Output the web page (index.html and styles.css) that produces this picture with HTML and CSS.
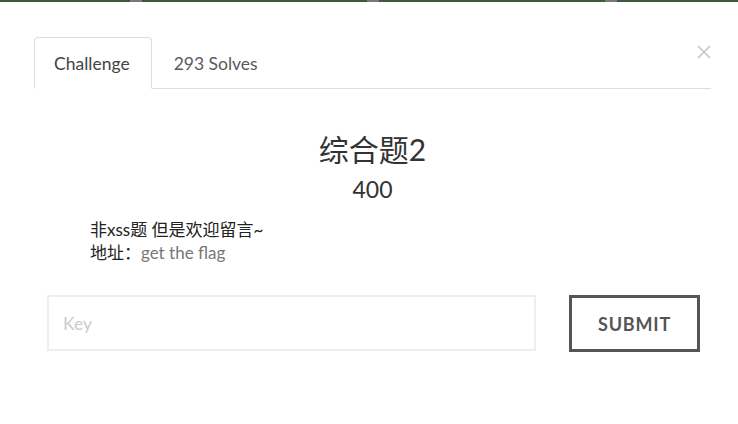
FILE: index.html
```html
<!DOCTYPE html>
<html lang="zh">
<head>
  <meta charset="UTF-8" />
  <meta name="viewport" content="width=device-width, initial-scale=1.0"/>
  <title>综合题2</title>
  <link rel="stylesheet" href="styles.css">
</head>
<body>

  <!-- strip of the page behind the modal -->
  <div class="top-strip">
    <span class="strip-mark mark-1"></span>
    <span class="strip-mark mark-2"></span>
    <span class="strip-mark mark-3"></span>
  </div>

  <div class="modal">
    <button class="close-btn" aria-label="Close">
      <svg width="14" height="14" viewBox="0 0 14 14">
        <path d="M1 1 L13 13 M13 1 L1 13" stroke="#c4c4c4" stroke-width="1.6" fill="none"/>
      </svg>
    </button>

    <!-- Tabs -->
    <ul class="nav-tabs">
      <li class="tab active">Challenge</li>
      <li class="tab">293 Solves</li>
    </ul>

    <div class="challenge">
      <h2 class="chal-name">综合题2</h2>
      <h3 class="chal-value">400</h3>
      <div class="chal-desc">
        <p>非xss题 但是欢迎留言~</p>
        <p>地址：<a href="#">get the flag</a></p>
      </div>

      <div class="submit-row">
        <input type="text" class="key-input" placeholder="Key" />
        <button class="submit-btn">Submit</button>
      </div>
    </div>
  </div>

</body>
</html>
```

FILE: styles.css
```css
body {
  margin: 0;
  font-family: Lato, "Noto Sans CJK SC", sans-serif;
  background-color: #fff;
  color: #333;
}
.top-strip {
  position: relative;
  height: 2px;
  background-color: #3c5a3e;
}
.strip-mark {
  position: absolute;
  top: 0;
  height: 2px;
  width: 12px;
  background-color: #7a7878;
}
.mark-1 { left: 130px; }
.mark-2 { left: 367px; }
.mark-3 { left: 605px; }

.modal {
  position: relative;
  padding: 35px 27px 0 34px;
}
.close-btn {
  position: absolute;
  top: 43px;
  right: 27px;
  padding: 0;
  border: none;
  background: none;
  cursor: pointer;
}
.nav-tabs {
  display: flex;
  list-style: none;
  margin: 0;
  padding: 0;
  border-bottom: 1px solid #ddd;
}
.tab {
  font-size: 17.5px;
  line-height: 24px;
  padding: 14px 21px 12px 19px;
  margin-bottom: -1px;
  border: 1px solid transparent;
  border-radius: 4px 4px 0 0;
  color: #5a5a5a;
}
.tab.active {
  border-color: #ddd #ddd #fff;
  background-color: #fff;
  color: #444;
}
.tab + .tab {
  padding-left: 21px;
}

.challenge {
  text-align: center;
}
.chal-name {
  font-size: 30px;
  font-weight: normal;
  line-height: 36px;
  margin: 42px 0 0;
  color: #333;
}
.chal-value {
  font-size: 23px;
  font-weight: normal;
  line-height: 28px;
  margin: 8px 0 0;
  color: #333;
}
.chal-desc {
  text-align: left;
  padding-left: 56px;
  margin-top: 15px;
  font-size: 17px;
  line-height: 23px;
  color: #222;
}
.chal-desc p {
  margin: 0;
}
.chal-desc a {
  color: #777;
  text-decoration: none;
}

.submit-row {
  display: flex;
  gap: 33px;
  margin: 31px 11px 0 13px;
}
.key-input {
  flex: 1;
  height: 56px;
  box-sizing: border-box;
  border: 2px solid #eee;
  padding: 0 14px;
  font-family: Lato, sans-serif;
  font-size: 17.5px;
  color: #555;
  outline: none;
}
.key-input::placeholder {
  color: #ccc;
}
.submit-btn {
  width: 131px;
  height: 57px;
  box-sizing: border-box;
  border: 3px solid #555;
  background-color: #fff;
  font-family: Lato, sans-serif;
  font-size: 18px;
  font-weight: bold;
  letter-spacing: 0.8px;
  text-transform: uppercase;
  color: #555;
  cursor: pointer;
}
```
